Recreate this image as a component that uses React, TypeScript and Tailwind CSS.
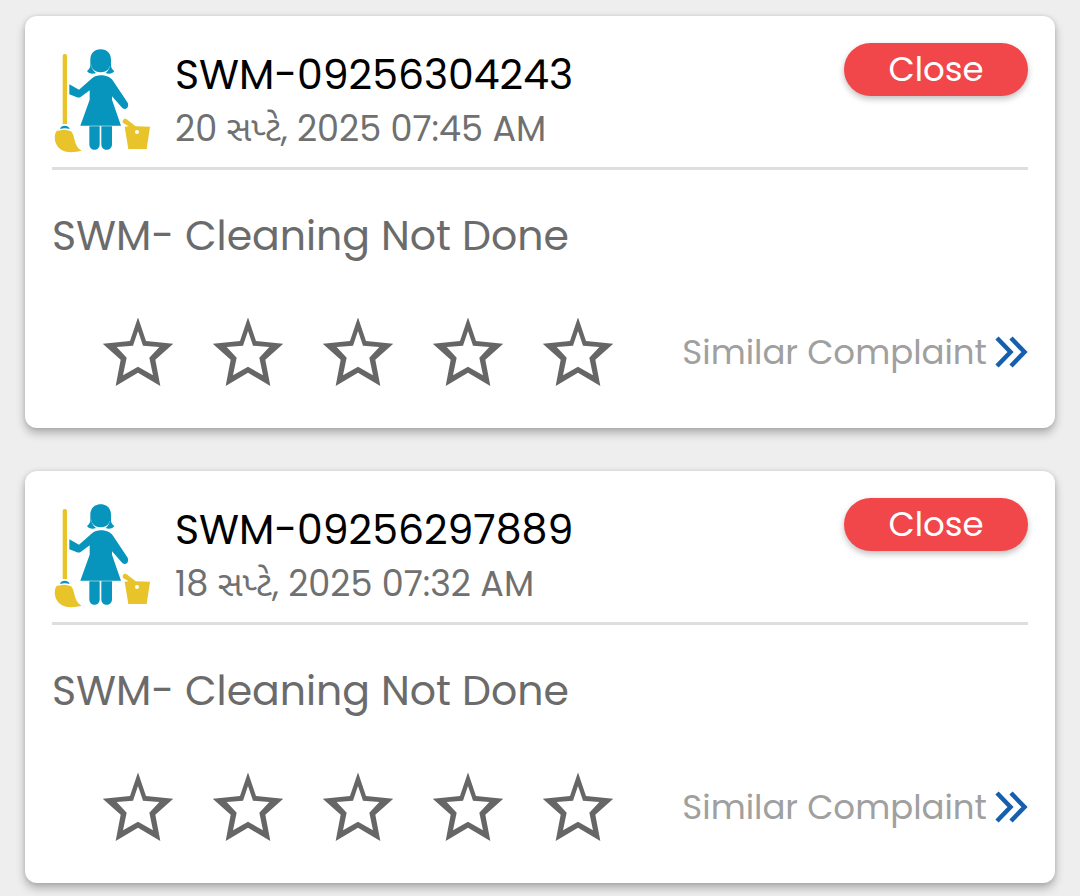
import { useState } from "react";

type Complaint = {
  id: string;
  date: string;
  title: string;
};

const complaints: Complaint[] = [
  { id: "SWM-09256304243", date: "20 સપ્ટે, 2025 07:45 AM", title: "SWM- Cleaning Not Done" },
  { id: "SWM-09256297889", date: "18 સપ્ટે, 2025 07:32 AM", title: "SWM- Cleaning Not Done" },
];

function CleanerIcon() {
  return (
    <svg viewBox="36 39 300 318" className="h-[106px] w-[100px] shrink-0" aria-hidden="true">
      <g fill="#0795bd">
        <path d="M182 43C162 43 151 57 151 74V92C150 99 146 104 141 108C146 116 158 119 168 114C158 106 154 98 154 88H210C210 98 206 106 197 114C207 119 218 116 223 108C217 104 214 99 213 92V74C213 57 202 43 182 43Z" />
        <path d="M153 78H211C213 98 202 112 182 112C162 112 151 98 153 78Z" />
        <path d="M182 121C172 121 164 124 157 129L117 164L88 148V178L111 187Q117 189 123 185L149 166V194L121 272H243L216 194V184L245 217C250 223 257 223 262 218C266 213 265 207 262 202L219 137C211 126 197 121 182 121Z" />
        <path d="M148 274H179V328C179 350 148 350 148 328ZM184 274H216V328C216 350 184 350 184 328Z" />
        <path d="M60 282C63 269 85 269 89 282Q74 277 60 282Z" />
      </g>
      <g fill="#e8c32a">
        <path d="M68 63C68 55 81 55 81 63V267H68Z" />
        <path d="M57 287Q75 281 93 289C107 302 99 334 125 347C102 353 73 355 57 339C44 326 41 305 48 291Q51 286 57 287Z" />
        <path d="M254 275L266 274L249 264C246 257 251 249 259 252L287 274L330 275L320 342H265Z" />
      </g>
      <circle cx="291" cy="291" r="6" fill="#fff" />
    </svg>
  );
}

function StarIcon({ filled }: { filled: boolean }) {
  return (
    <svg viewBox="9 8 210 204" className="h-[68px] w-[70px]" aria-hidden="true">
      <path
        fill="#666"
        d="M114 6L138 77L220 85L166 133L181 212L114 172L47 212L62 133L8 85L90 77Z"
      />
      <path
        fill={filled ? "#666" : "#fff"}
        d="M114 47L129 91L178 95L148 127L159 180L114 154L69 180L80 127L50 95L99 91Z"
      />
    </svg>
  );
}

function ComplaintCard({ id, date, title }: Complaint) {
  const [rating, setRating] = useState(0);
  return (
    <article className="rounded-xl bg-white px-[27px] pt-[27px] pb-[42px] shadow-[0_5px_10px_rgba(0,0,0,0.28),0_0_4px_rgba(0,0,0,0.1)]">
      <header className="flex items-start border-b-[3px] border-[#dedede] pb-3">
        <div className="flex min-w-0 flex-1 items-center gap-[23px] pt-1">
          <CleanerIcon />
          <div>
            <h2 className="text-[41px] leading-[56px] text-black">{id}</h2>
            <p className="text-[35px] leading-[52px] text-[#707070]">{date}</p>
          </div>
        </div>
        <button
          type="button"
          className="h-[53px] w-[184px] shrink-0 rounded-full bg-[#f1474a] text-[34px] leading-[53px] text-white shadow-[0_3px_6px_rgba(0,0,0,0.25)]"
        >
          Close
        </button>
      </header>
      <p className="mt-9 text-[41px] leading-[60px] text-[#6b6b6b]">{title}</p>
      <div className="mt-[52px] flex items-center justify-between">
        <div role="radiogroup" aria-label="Rating" className="flex gap-10 pl-[51px]">
          {[1, 2, 3, 4, 5].map((value) => (
            <label key={value} className="relative cursor-pointer">
              <input
                type="radio"
                name={`rating-${id}`}
                value={value}
                checked={rating === value}
                onChange={() => setRating(value)}
                aria-label={`${value} of 5`}
                className="sr-only"
              />
              <StarIcon filled={value <= rating} />
            </label>
          ))}
        </div>
        <a href="#similar" className="flex items-center gap-2 text-[34px] leading-[50px] whitespace-nowrap text-[#a0a0a0]">
          Similar Complaint
          <svg viewBox="0 0 33 32" className="h-8 w-[33px]" fill="none" stroke="#165fac" strokeWidth="4.5" aria-hidden="true">
            <path d="M2 2L15.5 16L2 30M16 2L29.5 16L16 30" />
          </svg>
        </a>
      </div>
    </article>
  );
}

export default function App() {
  return (
    <main className="flex min-h-screen flex-col gap-[43px] bg-[#eee] px-[25px] pt-4 pb-[13px] font-['Poppins','Inter','Noto_Sans_Gujarati',sans-serif]">
      {complaints.map((complaint) => (
        <ComplaintCard key={complaint.id} {...complaint} />
      ))}
    </main>
  );
}
